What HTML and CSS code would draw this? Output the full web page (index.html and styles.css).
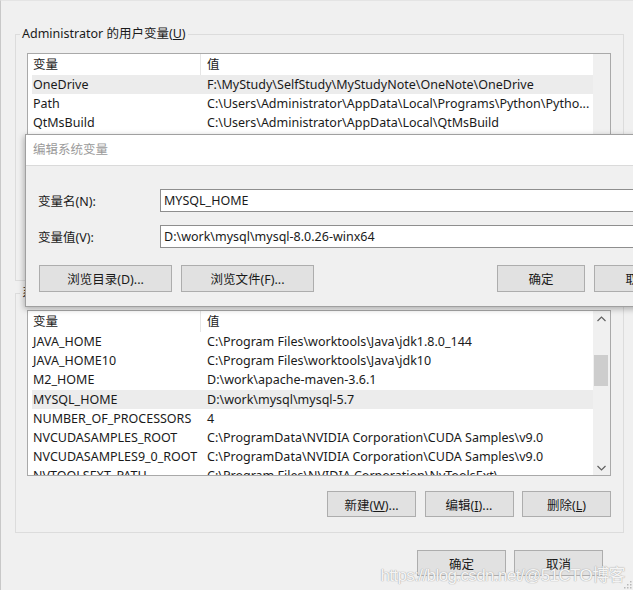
FILE: index.html
```html
<!DOCTYPE html>
<html lang="zh-CN">
<head>
<meta charset="utf-8">
<title>环境变量</title>
<link rel="stylesheet" href="styles.css">
</head>
<body>
<div class="window">
  <fieldset class="group user-group">
    <legend>Administrator 的用户变量(<u>U</u>)</legend>
    <div class="listbox user-list">
      <div class="rows">
        <div class="row header"><span class="c1">变量</span><span class="c2">值</span></div>
        <div class="row sel"><span class="c1">OneDrive</span><span class="c2">F:\MyStudy\SelfStudy\MyStudyNote\OneNote\OneDrive</span></div>
        <div class="row"><span class="c1">Path</span><span class="c2">C:\Users\Administrator\AppData\Local\Programs\Python\Pytho...</span></div>
        <div class="row"><span class="c1">QtMsBuild</span><span class="c2">C:\Users\Administrator\AppData\Local\QtMsBuild</span></div>
        <div class="row"><span class="c1">TEMP</span><span class="c2">C:\Users\Administrator\AppData\Local\Temp</span></div>
        <div class="row"><span class="c1">TMP</span><span class="c2">C:\Users\Administrator\AppData\Local\Temp</span></div>
      </div>
      <div class="vscroll"></div>
    </div>
    <div class="btn-row">
      <button class="btn">新建(<u>N</u>)...</button>
      <button class="btn">编辑(<u>E</u>)...</button>
      <button class="btn">删除(<u>D</u>)</button>
    </div>
  </fieldset>

  <fieldset class="group sys-group">
    <legend>系统变量(<u>S</u>)</legend>
    <div class="listbox sys-list">
      <div class="rows">
        <div class="row header"><span class="c1">变量</span><span class="c2">值</span></div>
        <div class="row"><span class="c1">JAVA_HOME</span><span class="c2">C:\Program Files\worktools\Java\jdk1.8.0_144</span></div>
        <div class="row"><span class="c1">JAVA_HOME10</span><span class="c2">C:\Program Files\worktools\Java\jdk10</span></div>
        <div class="row"><span class="c1">M2_HOME</span><span class="c2">D:\work\apache-maven-3.6.1</span></div>
        <div class="row sel"><span class="c1">MYSQL_HOME</span><span class="c2">D:\work\mysql\mysql-5.7</span></div>
        <div class="row"><span class="c1">NUMBER_OF_PROCESSORS</span><span class="c2">4</span></div>
        <div class="row"><span class="c1">NVCUDASAMPLES_ROOT</span><span class="c2">C:\ProgramData\NVIDIA Corporation\CUDA Samples\v9.0</span></div>
        <div class="row"><span class="c1">NVCUDASAMPLES9_0_ROOT</span><span class="c2">C:\ProgramData\NVIDIA Corporation\CUDA Samples\v9.0</span></div>
        <div class="row"><span class="c1">NVTOOLSEXT_PATH</span><span class="c2">C:\Program Files\NVIDIA Corporation\NvToolsExt\</span></div>
      </div>
      <div class="vscroll">
        <div class="arrow"><svg width="9" height="6" viewBox="0 0 9 6"><path d="M0.5 5 L4.5 1 L8.5 5" fill="none" stroke="#606060" stroke-width="1.2"/></svg></div>
        <div class="track"><div class="thumb"></div></div>
        <div class="arrow"><svg width="9" height="6" viewBox="0 0 9 6"><path d="M0.5 1 L4.5 5 L8.5 1" fill="none" stroke="#606060" stroke-width="1.2"/></svg></div>
      </div>
    </div>
    <div class="btn-row">
      <button class="btn">新建(<u>W</u>)...</button>
      <button class="btn">编辑(<u>I</u>)...</button>
      <button class="btn">删除(<u>L</u>)</button>
    </div>
  </fieldset>

  <div class="footer">
    <button class="btn">确定</button>
    <button class="btn">取消</button>
  </div>

  <div class="dialog">
    <div class="dialog-title">编辑系统变量</div>
    <div class="dialog-body">
      <div class="fields">
        <label class="flabel">变量名(N):</label>
        <div class="input">MYSQL_HOME</div>
        <label class="flabel">变量值(V):</label>
        <div class="input">D:\work\mysql\mysql-8.0.26-winx64</div>
      </div>
      <div class="dlg-buttons">
        <button class="btn wide">浏览目录(D)...</button>
        <button class="btn wide">浏览文件(F)...</button>
        <span class="spacer"></span>
        <button class="btn">确定</button>
        <button class="btn">取消</button>
      </div>
    </div>
  </div>

  <div class="watermark">https://blog.csdn.net/@51CTO博客</div>
  <svg class="grip" width="10" height="10" viewBox="0 0 10 10">
    <rect x="8" y="2" width="1.5" height="1.5" fill="#b8b8b8"/>
    <rect x="5" y="5" width="1.5" height="1.5" fill="#b8b8b8"/>
    <rect x="8" y="5" width="1.5" height="1.5" fill="#b8b8b8"/>
    <rect x="2" y="8" width="1.5" height="1.5" fill="#b8b8b8"/>
    <rect x="5" y="8" width="1.5" height="1.5" fill="#b8b8b8"/>
    <rect x="8" y="8" width="1.5" height="1.5" fill="#b8b8b8"/>
  </svg>
</div>
</body>
</html>
```

FILE: styles.css
```css
* { box-sizing: border-box; }

html, body {
  margin: 0;
  padding: 0;
  width: 633px;
  height: 590px;
  overflow: hidden;
  background: #f0f0f0;
}

body {
  font-family: "Noto Sans", "Noto Sans CJK SC", sans-serif;
  font-size: 12.5px;
  color: #1a1a1a;
}

.window {
  position: relative;
  height: 590px;
  padding: 25px 9px 0 14px;
  border-left: 1px solid #c8c8c8;
  border-top: 1px solid #e4e4e4;
}

.group {
  margin: 0;
  border: 1px solid #dcdcdc;
  padding: 11px 12px 12px 11px;
  min-width: 0;
}

.group legend {
  margin-left: -7px;
  padding: 0 2px;
  font-size: 12.5px;
  line-height: 16px;
}

.user-group { padding-bottom: 12px; }

.sys-group {
  margin-top: 4px;
  padding-top: 9px;
  padding-bottom: 15px;
}

.listbox {
  display: flex;
  background: #fff;
  border: 1px solid #a9a9a9;
  overflow: hidden;
}

.user-list { height: 176px; }
.sys-list { height: 166px; }

.rows {
  flex: 1;
  min-width: 0;
  overflow: hidden;
}

.row {
  display: grid;
  grid-template-columns: 169px 1fr;
  height: 19.2px;
  line-height: 19.2px;
  margin-left: 4px;
  white-space: nowrap;
}

.row .c1 { padding-left: 1px; overflow: hidden; }
.row .c2 { padding-left: 6px; overflow: hidden; }

.row.header {
  height: 21px;
  line-height: 21px;
  margin-left: 0;
  grid-template-columns: 173px 1fr;
}
.row.header .c1 {
  padding-left: 5px;
  border-right: 1px solid #e5e5e5;
}

.row.sel { background: #ececec; }

.vscroll {
  width: 17px;
  flex: none;
  background: #f0f0f0;
  display: flex;
  flex-direction: column;
}

.arrow {
  height: 15px;
  display: flex;
  align-items: center;
  justify-content: center;
}

.track { flex: 1; }

.thumb {
  margin: 29px 2px 0 1px;
  height: 31px;
  background: #cdcdcd;
}

.btn-row {
  display: flex;
  justify-content: flex-end;
  gap: 8.5px;
  margin-top: 15px;
}

.user-group .btn-row { margin-top: 13px; }

.btn {
  width: 89px;
  height: 26px;
  padding: 0;
  flex: none;
  background: #e1e1e1;
  border: 1px solid #adadad;
  font-family: inherit;
  font-size: 12.5px;
  color: #1a1a1a;
}

.footer {
  display: flex;
  justify-content: flex-end;
  gap: 8px;
  margin-top: 17px;
  padding-right: 21px;
}

/* Dialog overlaying the window */
.dialog {
  position: absolute;
  left: 24px;
  top: 133px;
  width: 670px;
  height: 173px;
  background: #f0f0f0;
  border: 1px solid #a0a0a0;
  box-shadow: -1px 2px 6px rgba(0, 0, 0, 0.28);
}

.dialog-title {
  height: 31px;
  line-height: 30px;
  padding-left: 7px;
  background: #fff;
  border-bottom: 1px solid #dadada;
  color: #9a9a9a;
  font-size: 12.5px;
}

.dialog-body {
  padding: 23px 12px 13px 12px;
}

.fields {
  display: grid;
  grid-template-columns: 122px 1fr;
  row-gap: 13px;
  align-items: center;
}

.flabel { font-size: 12.5px; }

.input {
  height: 23px;
  line-height: 21px;
  padding-left: 3px;
  background: #fff;
  border: 1px solid #8e8e8e;
  font-size: 12.5px;
  white-space: nowrap;
}

.dlg-buttons {
  display: flex;
  gap: 9px;
  margin-top: 17px;
  margin-left: 1px;
}

.dlg-buttons .btn {
  width: 88px;
  height: 27px;
}

.dlg-buttons .btn.wide { width: 133px; }

.spacer { flex: 1; }

.watermark {
  position: absolute;
  right: 8px;
  bottom: 4px;
  font-family: "Liberation Sans", "Noto Sans CJK SC", sans-serif;
  font-size: 17px;
  letter-spacing: -0.6px;
  color: rgba(255, 255, 255, 0.9);
  text-shadow: 0 0 1px #a8a8a8, 0 0 1px #a8a8a8;
  white-space: nowrap;
}

.grip {
  position: absolute;
  right: 1px;
  bottom: 1px;
}
```
